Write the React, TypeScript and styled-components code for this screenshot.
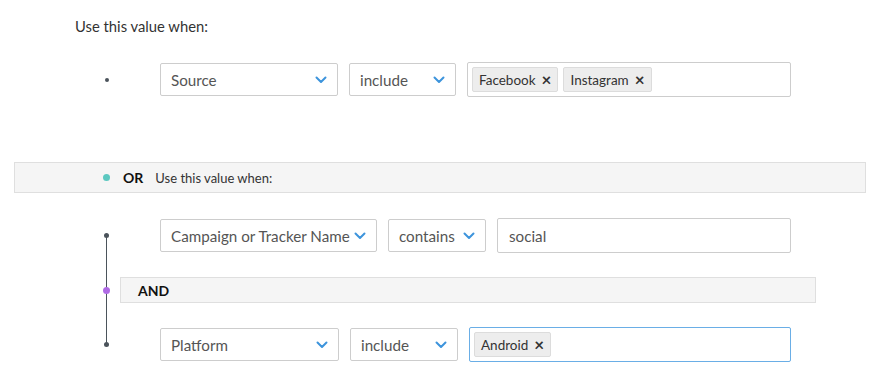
import styled, { createGlobalStyle } from "styled-components";

const GlobalStyle = createGlobalStyle`
  body {
    margin: 0;
    background: #fff;
    font-family: Lato, "Open Sans", sans-serif;
    color: #333;
  }
`;

const Page = styled.div`
  width: 879px;
  height: 389px;
  overflow: hidden;
  padding-top: 16px;
  box-sizing: border-box;
`;

const Heading = styled.div`
  padding-left: 75px;
  font-size: 14.8px;
  line-height: 20px;
  color: #333;
`;

const ConditionRow = styled.div<{ $top?: number }>`
  display: flex;
  align-items: center;
  gap: 11px;
  margin-top: ${(p) => p.$top ?? 0}px;
  padding-right: 88px;
  height: 35px;
`;

const Rail = styled.div<{ $before?: number; $after?: number }>`
  width: 25px;
  flex: 0 0 25px;
  display: flex;
  justify-content: center;
  align-items: center;
  margin-left: ${(p) => p.$before ?? 94}px;
  margin-right: ${(p) => p.$after ?? 30}px;
  position: relative;
  z-index: 1;
`;

const Dot = styled.span<{ $color: string; $size: number }>`
  display: block;
  width: ${(p) => p.$size}px;
  height: ${(p) => p.$size}px;
  border-radius: 50%;
  background: ${(p) => p.$color};
`;

const Select = styled.div<{ $width: number }>`
  width: ${(p) => p.$width}px;
  flex: 0 0 ${(p) => p.$width}px;
  height: 33px;
  box-sizing: border-box;
  border: 1px solid #cdcdcd;
  border-radius: 2px;
  display: flex;
  align-items: center;
  justify-content: space-between;
  padding: 0 10px 0 10px;
  font-size: 15.2px;
  color: #555;
  white-space: nowrap;
`;

const FieldBox = styled.div<{ $focused?: boolean }>`
  flex: 1;
  height: 35px;
  box-sizing: border-box;
  border: 1px solid ${(p) => (p.$focused ? "#6aaee6" : "#cdcdcd")};
  border-radius: 2px;
  display: flex;
  align-items: center;
  gap: 5px;
  padding: 0 4px;
  font-size: 15.2px;
  color: #555;
`;

const TextValue = styled.span`
  padding-left: 7px;
`;

const Tag = styled.span`
  display: inline-flex;
  align-items: center;
  gap: 6px;
  height: 25px;
  box-sizing: border-box;
  padding: 0 6px;
  background: #ededed;
  border: 1px solid #dcdcdc;
  border-radius: 2px;
  font-size: 13.5px;
  color: #333;
`;

const Remove = styled.span`
  font-size: 17px;
  font-weight: 700;
  color: #333;
  line-height: 1;
`;

const OrBand = styled.div`
  margin: 65px 13px 0 14px;
  height: 31px;
  box-sizing: border-box;
  background: #f5f5f5;
  border: 1px solid #dfdfdf;
  display: flex;
  align-items: center;
`;

const BandWord = styled.span`
  font-size: 14px;
  font-weight: 700;
  color: #111;
  margin-right: 12px;
`;

const BandNote = styled.span`
  font-size: 13px;
  color: #333;
`;

const Group = styled.div`
  position: relative;
  margin-top: 25px;
  display: flex;
  flex-direction: column;
  gap: 25px;
`;

const GroupLine = styled.div`
  position: absolute;
  left: 106px;
  top: 18px;
  bottom: 17px;
  width: 1px;
  background: #4b535b;
`;

const AndRow = styled.div`
  display: flex;
  align-items: center;
  height: 26px;
  margin: -1px 0;
`;

const AndBand = styled.div`
  width: 696px;
  height: 26px;
  box-sizing: border-box;
  background: #f5f5f5;
  border: 1px solid #dfdfdf;
  display: flex;
  align-items: center;
  padding-left: 17px;
  font-size: 14px;
  font-weight: 700;
  color: #111;
`;

const Chevron = () => (
  <svg width="12" height="8" viewBox="0 0 12 8">
    <path
      d="M1.5 1.5 L6 6 L10.5 1.5"
      fill="none"
      stroke="#3d94dc"
      strokeWidth="2"
      strokeLinecap="round"
      strokeLinejoin="round"
    />
  </svg>
);

const Dropdown = ({ label, width }: { label: string; width: number }) => (
  <Select $width={width}>
    <span>{label}</span>
    <Chevron />
  </Select>
);

const Chip = ({ label }: { label: string }) => (
  <Tag>
    {label}
    <Remove>×</Remove>
  </Tag>
);

export default function App() {
  return (
    <>
      <GlobalStyle />
      <Page>
        <Heading>Use this value when:</Heading>

        <ConditionRow $top={26}>
          <Rail>
            <Dot $color="#4b535b" $size={4} />
          </Rail>
          <Dropdown label="Source" width={178} />
          <Dropdown label="include" width={107} />
          <FieldBox>
            <Chip label="Facebook" />
            <Chip label="Instagram" />
          </FieldBox>
        </ConditionRow>

        <OrBand>
          <Rail $before={79} $after={4}>
            <Dot $color="#5cc8c0" $size={7} />
          </Rail>
          <BandWord>OR</BandWord>
          <BandNote>Use this value when:</BandNote>
        </OrBand>

        <Group>
          <GroupLine />
          <ConditionRow>
            <Rail>
              <Dot $color="#4b535b" $size={5} />
            </Rail>
            <Dropdown label="Campaign or Tracker Name" width={217} />
            <Dropdown label="contains" width={98} />
            <FieldBox>
              <TextValue>social</TextValue>
            </FieldBox>
          </ConditionRow>

          <AndRow>
            <Rail $after={1}>
              <Dot $color="#b06be6" $size={7} />
            </Rail>
            <AndBand>AND</AndBand>
          </AndRow>

          <ConditionRow>
            <Rail>
              <Dot $color="#4b535b" $size={5} />
            </Rail>
            <Dropdown label="Platform" width={179} />
            <Dropdown label="include" width={108} />
            <FieldBox $focused>
              <Chip label="Android" />
            </FieldBox>
          </ConditionRow>
        </Group>
      </Page>
    </>
  );
}
